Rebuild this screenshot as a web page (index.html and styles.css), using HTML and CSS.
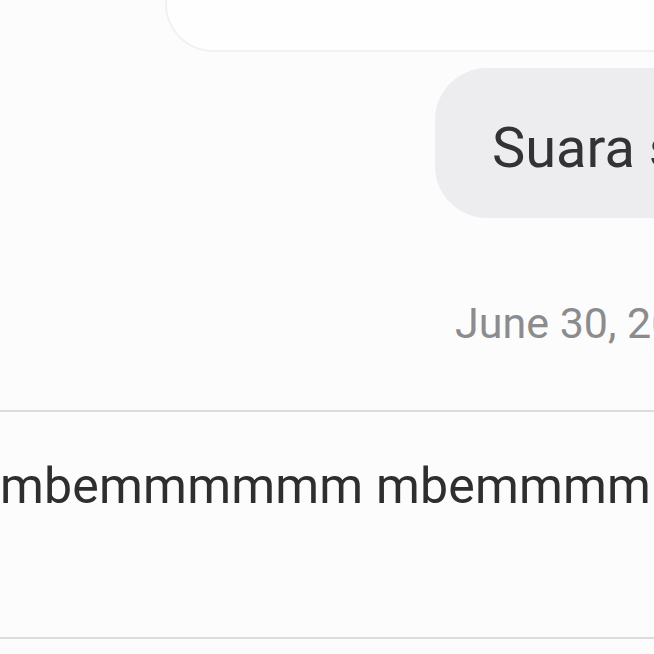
FILE: index.html
```html
<!DOCTYPE html>
<html lang="en">
<head>
    <meta charset="UTF-8">
    <meta name="viewport" content="width=device-width, initial-scale=1.0">
    <title>Chat</title>
    <link rel="stylesheet" href="styles.css">
</head>
<body>
    <div class="thread">
        <div class="card-row">
            <div class="card"></div>
        </div>

        <div class="bubble-row">
            <div class="bubble">Suara saya</div>
        </div>

        <div class="date-row">June 30, 2023</div>
    </div>

    <div class="composer">
        <div class="composer-text">mbemmmmmm mbemmmmmm</div>
    </div>
</body>
</html>
```

FILE: styles.css
```css
* {
    margin: 0;
    padding: 0;
    box-sizing: border-box;
}

html, body {
    width: 654px;
    height: 654px;
    overflow: hidden;
}

body {
    font-family: Roboto, "Noto Sans", sans-serif;
    background: #fcfcfd;
    color: #333;
}

.thread {
    height: 410px;
    display: flex;
    flex-direction: column;
}

.card-row {
    padding-left: 165px;
}

.card {
    height: 52px;
    width: 600px;
    background: #fefefe;
    border: 2px solid #f1f1f4;
    border-top: none;
    border-right: none;
    border-radius: 0 0 0 48px;
}

.bubble-row {
    margin-top: 16px;
    padding-left: 435px;
    white-space: nowrap;
}

.bubble {
    display: inline-block;
    height: 150px;
    line-height: 160px;
    padding: 0 40px 0 57px;
    background: #ededf0;
    border-radius: 52px;
    font-size: 56px;
    color: #333;
}

.date-row {
    margin-top: 80px;
    padding-left: 455px;
    white-space: nowrap;
    font-size: 43px;
    color: #8c8c8f;
}

.composer {
    height: 229px;
    border-top: 2px solid #dcdcde;
    border-bottom: 2px solid #dcdcde;
    display: flex;
    align-items: flex-start;
}

.composer-text {
    margin-top: 45px;
    white-space: nowrap;
    font-size: 50px;
    letter-spacing: 0.2px;
    color: #2e2e2e;
}
```
